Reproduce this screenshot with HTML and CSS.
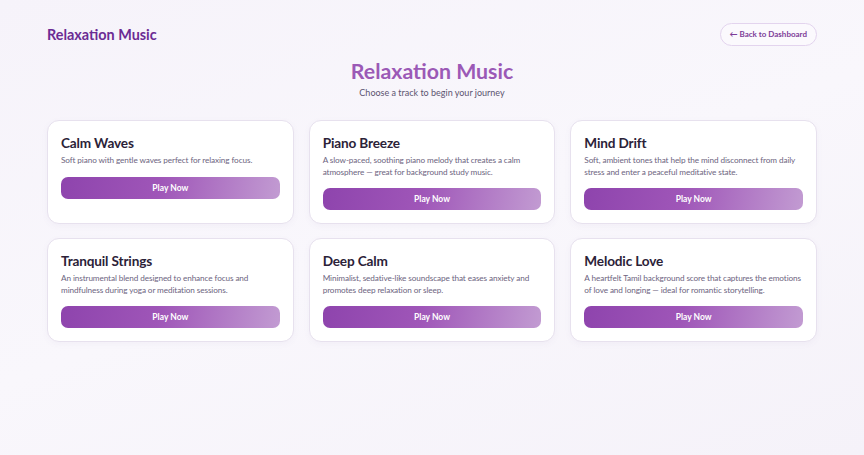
FILE: index.html
```html
<!DOCTYPE html>
<html lang="en">
<head>
<meta charset="utf-8">
<title>Relaxation Music</title>
<link rel="stylesheet" href="styles.css">
</head>
<body>
<div class="page">
  <header class="topbar">
    <div class="brand">Relaxation Music</div>
    <a class="back" href="#">← Back to Dashboard</a>
  </header>
  <section class="hero">
    <h1>Relaxation Music</h1>
    <p>Choose a track to begin your journey</p>
  </section>
  <main class="grid">
    <div class="card">
      <h2>Calm Waves</h2>
      <p>Soft piano with gentle waves perfect for relaxing focus.</p>
      <button class="play">Play Now</button>
    </div>
    <div class="card">
      <h2>Piano Breeze</h2>
      <p>A slow-paced, soothing piano melody that creates a calm atmosphere — great for background study music.</p>
      <button class="play">Play Now</button>
    </div>
    <div class="card">
      <h2>Mind Drift</h2>
      <p>Soft, ambient tones that help the mind disconnect from daily stress and enter a peaceful meditative state.</p>
      <button class="play">Play Now</button>
    </div>
    <div class="card">
      <h2>Tranquil Strings</h2>
      <p>An instrumental blend designed to enhance focus and mindfulness during yoga or meditation sessions.</p>
      <button class="play">Play Now</button>
    </div>
    <div class="card">
      <h2>Deep Calm</h2>
      <p>Minimalist, sedative-like soundscape that eases anxiety and promotes deep relaxation or sleep.</p>
      <button class="play">Play Now</button>
    </div>
    <div class="card">
      <h2>Melodic Love</h2>
      <p>A heartfelt Tamil background score that captures the emotions of love and longing — ideal for romantic storytelling.</p>
      <button class="play">Play Now</button>
    </div>
  </main>
</div>
</body>
</html>
```

FILE: styles.css
```css
* { box-sizing: border-box; }
html, body { height: 100%; }
body {
  margin: 0;
  font-family: "Lato", "Open Sans", sans-serif;
  background: linear-gradient(160deg, #f6f3fa 0%, #f9f7fc 50%, #f5f2f9 100%);
  color: #2b2238;
}
.page {
  width: 770px;
  margin: 0 auto;
  padding-top: 22px;
}
.topbar {
  display: flex;
  justify-content: space-between;
  align-items: center;
  height: 24px;
}
.brand {
  font-size: 14.4px;
  font-weight: 700;
  color: #6b2b94;
}
.back {
  font-size: 8px;
  font-weight: 700;
  color: #7d3c98;
  text-decoration: none;
  border: 1px solid #e3d4ee;
  background: #fbf9fd;
  border-radius: 12px;
  height: 23px;
  padding: 0 9px;
  display: flex;
  align-items: center;
}
.hero {
  text-align: center;
  margin-top: 11px;
}
.hero h1 {
  margin: 0;
  font-size: 21.3px;
  font-weight: 700;
  color: #9b59b6;
  line-height: 28px;
}
.hero p {
  margin: 0;
  font-size: 9px;
  color: #5c5470;
  line-height: 16px;
}
.grid {
  margin-top: 19px;
  display: grid;
  grid-template-columns: repeat(3, 1fr);
  column-gap: 15px;
  row-gap: 14px;
}
.card {
  background: #fff;
  border: 1px solid #e7e1ee;
  border-radius: 12px;
  padding: 12px 13px 13px;
  box-shadow: 0 2px 6px rgba(120, 90, 150, 0.05);
}
.card h2 {
  margin: 0;
  font-size: 13.6px;
  font-weight: 700;
  line-height: 20px;
  color: #2b2238;
  letter-spacing: -0.15px;
}
.card p {
  margin: 2px 0 10px;
  font-size: 8.2px;
  line-height: 11.5px;
  color: #6d6480;
  letter-spacing: -0.1px;
}
.play {
  display: block;
  width: 100%;
  height: 22px;
  border: none;
  border-radius: 7px;
  background: linear-gradient(100deg, #8e44ad 0%, #9f56b8 45%, #c29bd2 100%);
  color: #fff;
  font-family: inherit;
  font-size: 8.5px;
  font-weight: 700;
}
```
